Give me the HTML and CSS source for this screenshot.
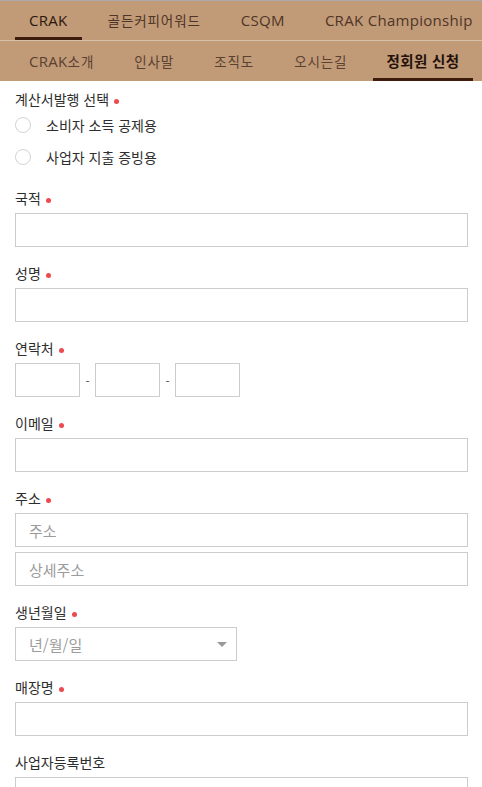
FILE: index.html
```html
<!DOCTYPE html>
<html lang="ko">
<head>
<meta charset="utf-8">
<title>정회원 신청</title>
<link rel="stylesheet" href="styles.css">
</head>
<body>
<header class="header">
  <nav class="nav nav-main">
    <ul class="nav-list">
      <li class="nav-item active">CRAK</li>
      <li class="nav-item"><span class="ko">골든커피어워드</span></li>
      <li class="nav-item">CSQM</li>
      <li class="nav-item">CRAK Championship</li>
    </ul>
  </nav>
  <nav class="nav nav-sub">
    <ul class="nav-list">
      <li class="nav-item">CRAK<span class="ko">소개</span></li>
      <li class="nav-item"><span class="ko">인사말</span></li>
      <li class="nav-item"><span class="ko">조직도</span></li>
      <li class="nav-item"><span class="ko">오시는길</span></li>
      <li class="nav-item active"><span class="ko">정회원 신청</span></li>
    </ul>
  </nav>
</header>
<main class="form">
  <div class="group group-radio">
    <div class="label">계산서발행 선택<span class="req"></span></div>
    <label class="radio-row"><input type="radio" name="bill" class="radio"><span>소비자 소득 공제용</span></label>
    <label class="radio-row"><input type="radio" name="bill" class="radio"><span>사업자 지출 증빙용</span></label>
  </div>
  <div class="group">
    <div class="label">국적<span class="req"></span></div>
    <input type="text" class="field">
  </div>
  <div class="group">
    <div class="label">성명<span class="req"></span></div>
    <input type="text" class="field">
  </div>
  <div class="group">
    <div class="label">연락처<span class="req"></span></div>
    <div class="phone">
      <input type="text" class="field field-phone">
      <span class="dash">-</span>
      <input type="text" class="field field-phone">
      <span class="dash">-</span>
      <input type="text" class="field field-phone">
    </div>
  </div>
  <div class="group">
    <div class="label">이메일<span class="req"></span></div>
    <input type="text" class="field">
  </div>
  <div class="group">
    <div class="label">주소<span class="req"></span></div>
    <input type="text" class="field" placeholder="주소">
    <input type="text" class="field field-next" placeholder="상세주소">
  </div>
  <div class="group">
    <div class="label">생년월일<span class="req"></span></div>
    <div class="date-wrap">
      <input type="text" class="field field-date" placeholder="년/월/일">
    </div>
  </div>
  <div class="group">
    <div class="label">매장명<span class="req"></span></div>
    <input type="text" class="field">
  </div>
  <div class="group">
    <div class="label">사업자등록번호</div>
    <input type="text" class="field">
  </div>
</main>
</body>
</html>
```
FILE: styles.css
```css
* { box-sizing: border-box; }
html, body { margin: 0; padding: 0; background: #fff; }
body {
  font-family: "Noto Sans CJK KR", "Open Sans", sans-serif;
  color: #333;
  width: 482px;
  overflow-x: hidden;
}
.header {
  background: #c19a78;
  border-top: 1px solid #a9a9a9;
}
.nav { height: 40px; }
.nav-main { border-bottom: 1px solid #d9c1a9; }
.nav-list {
  list-style: none;
  margin: 0;
  padding: 0 0 0 15px;
  display: flex;
  gap: 12px;
  height: 100%;
  white-space: nowrap;
}
.nav-item {
  font-family: "Open Sans", "Noto Sans CJK KR", sans-serif;
  font-size: 15px;
  letter-spacing: 0.3px;
  color: #4e3526;
  padding: 2px 14px 0;
  height: 100%;
  display: flex;
  align-items: center;
  border-bottom: 3px solid transparent;
}
.ko {
  font-family: "Noto Sans CJK KR", sans-serif;
  font-size: 13.5px;
  letter-spacing: 0.9px;
}
.nav-main .nav-item.active {
  color: #2c170b;
  border-bottom-color: #3d1c0c;
}
.nav-sub .nav-item { color: #5a4130; }
.nav-sub .nav-item.active {
  color: #24120a;
  font-weight: 700;
  border-bottom-color: #3d1c0c;
  padding: 2px 13px 0;
}
.nav-sub .nav-item.active .ko {
  font-size: 14.5px;
  letter-spacing: 0.4px;
}
.form {
  padding: 8px 14px 0 15px;
}
.group { margin-bottom: 16px; }
.group-radio { margin-bottom: 15px; }
.label {
  font-size: 14px;
  line-height: 20px;
  height: 20px;
  color: #2e2e2e;
  margin-bottom: 5px;
  display: flex;
  align-items: center;
}
.group-radio .label { margin-bottom: 0; }
.req {
  display: inline-block;
  width: 5px;
  height: 5px;
  border-radius: 50%;
  background: #ec4a4f;
  margin-left: 5px;
  margin-top: 5px;
}
.radio-row {
  display: flex;
  align-items: center;
  height: 32px;
  font-size: 14px;
  color: #2e2e2e;
}
.radio {
  appearance: none;
  -webkit-appearance: none;
  width: 16px;
  height: 16px;
  border: 1px solid #d3d3d3;
  border-radius: 50%;
  margin: 0 15px 0 0;
  background: #fff;
}
.field {
  display: block;
  width: 100%;
  height: 34px;
  border: 1px solid #ccc;
  border-radius: 0;
  background: #fff;
  padding: 0 13px;
  font-family: "Noto Sans CJK KR", sans-serif;
  font-size: 15px;
  color: #333;
  outline: none;
  margin: 0;
}
.field::placeholder { color: #9c9c9c; }
.field-next { margin-top: 5px; }
.phone {
  display: flex;
  align-items: center;
}
.field-phone { width: 65px; }
.dash {
  width: 15px;
  text-align: center;
  font-size: 12px;
  color: #555;
}
.date-wrap {
  position: relative;
  width: 222px;
}
.date-wrap::after {
  content: "";
  position: absolute;
  right: 10px;
  top: 15px;
  border-left: 5px solid transparent;
  border-right: 5px solid transparent;
  border-top: 5px solid #9a9a9a;
}
```
